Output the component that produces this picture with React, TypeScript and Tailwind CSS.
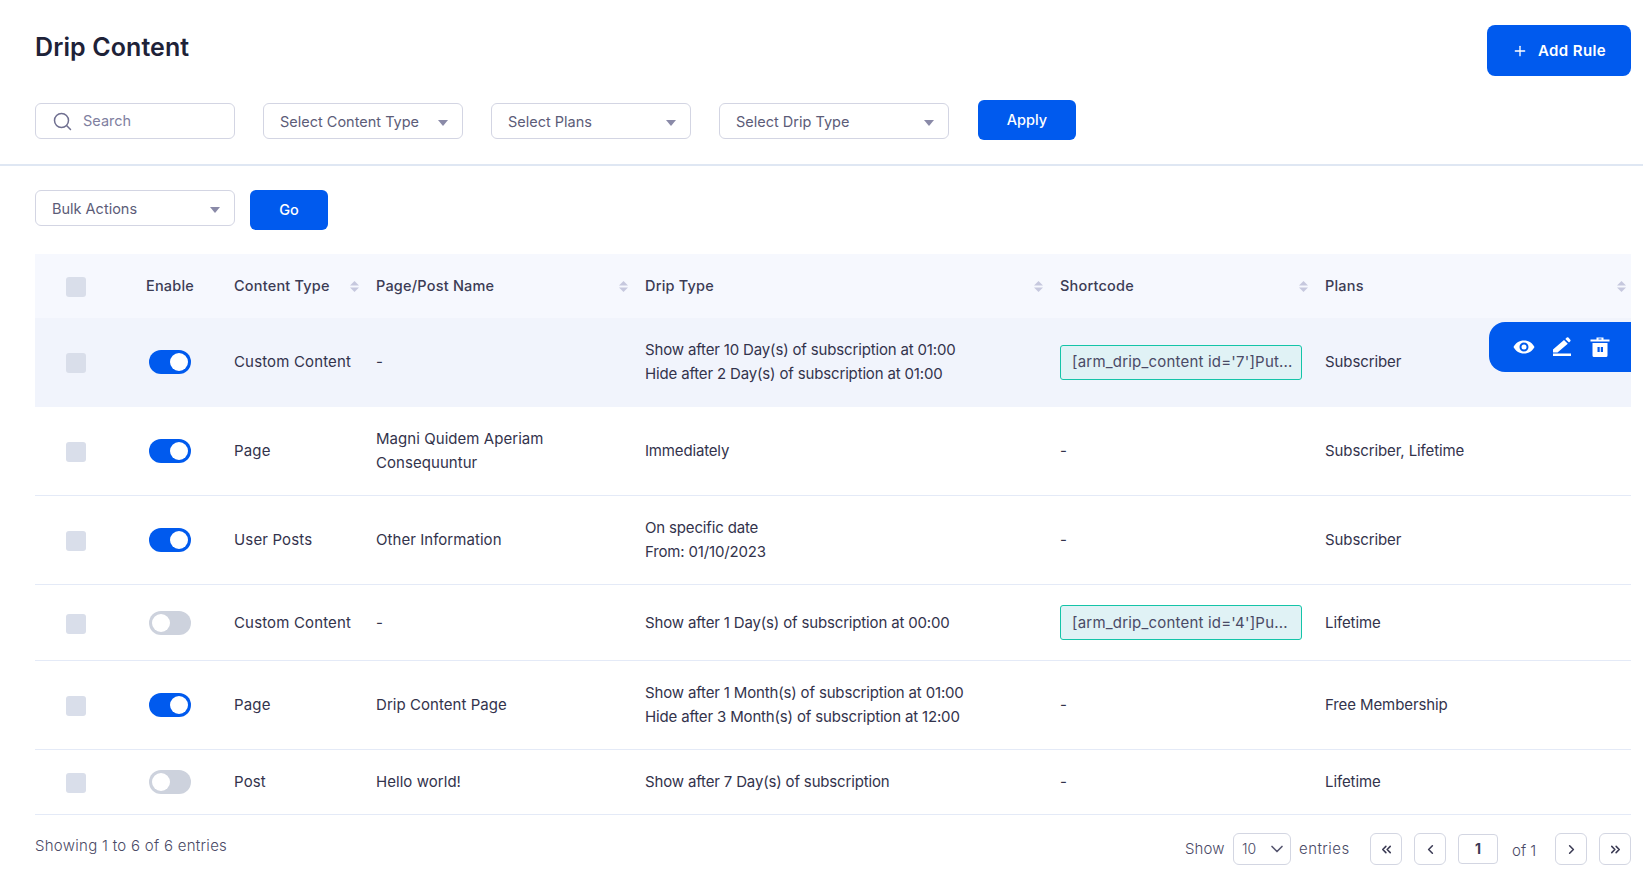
import React from "react";
import { ChevronDown, ChevronsLeft, ChevronLeft, ChevronRight, ChevronsRight, Plus } from "lucide-react";

const font = { fontFamily: "Inter, 'Liberation Sans', sans-serif" };

function Caret() {
  return <svg width="10" height="6" viewBox="0 0 10 6" className="mt-[3px] shrink-0"><path d="M0 0h10L5 6z" fill="#8a8aa8" /></svg>;
}
function Sort() {
  return (
    <svg width="9" height="11" viewBox="0 0 9 11" className="shrink-0">
      <path d="M4.5 0L9 4.5H0z" fill="#c6c8de" />
      <path d="M4.5 11L9 6.5H0z" fill="#c6c8de" />
    </svg>
  );
}
function Select({ label, w }: { label: string; w: string }) {
  return (
    <div className={`flex h-9 items-center justify-between rounded-md border border-[#d3d5e3] bg-white pl-4 pr-[14px] text-[14.5px] text-[#5c5c78] ${w}`}>
      <span className="pt-0.5">{label}</span>
      <Caret />
    </div>
  );
}
function Toggle({ on }: { on: boolean }) {
  return (
    <div className={`ml-[3px] flex h-6 w-[42px] items-center rounded-full px-[3px] ${on ? "justify-end bg-[#005aee]" : "justify-start bg-[#cdd2dd]"}`}>
      <div className="h-[18px] w-[18px] rounded-full bg-white" />
    </div>
  );
}
function Check() {
  return <div className="ml-[31px] mt-[2px] h-5 w-5 rounded-[3px] bg-[#d9deea]" />;
}
function Head({ label, sort, right = "pr-[17px]" }: { label: string; sort?: boolean; right?: string }) {
  return (
    <div className={`flex items-center justify-between ${right}`}>
      <span className="text-[14.5px] font-medium tracking-[0.2px] text-[#3c3c55]">{label}</span>
      {sort && <Sort />}
    </div>
  );
}
function Code({ text }: { text: string }) {
  return (
    <div className="flex h-[35px] w-[242px] items-center rounded-[3px] border border-[#14c4a8] bg-[#e0f2f5] pl-[11px] pr-[8px] text-[15px] tracking-[0.2px] text-[#4a4a66]">
      <span className="truncate">{text}</span>
    </div>
  );
}
const rows = [
  { on: true, type: "Custom Content", name: ["-"], drip: ["Show after 10 Day(s) of subscription at 01:00", "Hide after 2 Day(s) of subscription at 01:00"], code: "[arm_drip_content id='7']Put...", plans: "Subscriber", active: true },
  { on: true, type: "Page", name: ["Magni Quidem Aperiam", "Consequuntur"], drip: ["Immediately"], plans: "Subscriber, Lifetime" },
  { on: true, type: "User Posts", name: ["Other Information"], drip: ["On specific date", "From: 01/10/2023"], plans: "Subscriber" },
  { on: false, type: "Custom Content", name: ["-"], drip: ["Show after 1 Day(s) of subscription at 00:00"], code: "[arm_drip_content id='4']Pu...", plans: "Lifetime" },
  { on: true, type: "Page", name: ["Drip Content Page"], drip: ["Show after 1 Month(s) of subscription at 01:00", "Hide after 3 Month(s) of subscription at 12:00"], plans: "Free Membership" },
  { on: false, type: "Post", name: ["Hello world!"], drip: ["Show after 7 Day(s) of subscription"], plans: "Lifetime" },
];
const grid = "grid grid-cols-[111px_88px_142px_269px_415px_265px_306px] items-center";
function PageBtn({ children }: { children: React.ReactNode }) {
  return <div className="flex h-8 w-8 items-center justify-center rounded-md border border-[#d3d6e2] text-[#3c3c55]">{children}</div>;
}

export default function App() {
  return (
    <div className="h-[885px] w-[1643px] overflow-hidden bg-white" style={font}>
      <div className="flex h-[166px] flex-col border-b-2 border-[#dfe7f3]">
        <div className="flex justify-between pl-[35px] pr-3 pt-[25px]">
          <h1 className="mt-1 text-[25px] leading-9 font-semibold tracking-[0.1px] text-[#1e2238]">Drip Content</h1>
          <button className="flex h-[51px] w-[144px] items-center justify-center gap-[10px] rounded-lg bg-[#005aee] pt-px text-[15px] font-semibold tracking-[0.4px] text-white">
            <Plus size={16} strokeWidth={2} /> Add Rule
          </button>
        </div>
        <div className="mt-6 flex items-start gap-[28px] pl-[35px]">
          <div className="mt-[3px] flex h-9 w-[200px] items-center gap-[11px] rounded-md border border-[#d3d5e3] pl-[17px] text-[14.5px] text-[#8080a0]">
            <svg width="19" height="19" viewBox="0 0 19 19" fill="none" stroke="#6f6f90" strokeWidth="1.5" strokeLinecap="round"><circle cx="8.500" cy="8.500" r="7" /><path d="M13.800 13.800l3.700 3.700" /></svg>
            <span>Search</span>
          </div>
          <div className="mt-[3px]"><Select label="Select Content Type" w="w-[200px]" /></div>
          <div className="mt-[3px]"><Select label="Select Plans" w="w-[200px]" /></div>
          <div className="mt-[3px]"><Select label="Select Drip Type" w="w-[230px]" /></div>
          <button className="ml-px h-10 w-[98px] rounded-md bg-[#005aee] text-[14.5px] font-medium text-white">Apply</button>
        </div>
      </div>

      <div className="flex items-start gap-[15px] pl-[35px] pt-[24px]">
        <Select label="Bulk Actions" w="w-[200px]" />
        <button className="h-10 w-[78px] rounded-md bg-[#005aee] text-[14.5px] font-medium text-white">Go</button>
      </div>

      <div className="ml-[35px] mr-3 mt-6 text-[15px] leading-6 text-[#33334c]">
        <div className={`${grid} h-16 bg-[#f6f8fe]`}>
          <Check />
          <Head label="Enable" />
          <Head label="Content Type" sort />
          <Head label="Page/Post Name" sort />
          <Head label="Drip Type" sort />
          <Head label="Shortcode" sort />
          <Head label="Plans" sort right="pr-[5px]" />
        </div>
        {rows.map((r, i) => (
          <div key={i} className={`${grid} relative border-b py-5 ${r.active ? "border-[#f1f4fc] bg-[#f1f4fc]" : "border-[#e4eaf7]"}`}>
            <Check />
            <Toggle on={r.on} />
            <div className="tracking-[0.15px]">{r.type}</div>
            <div className="tracking-[0.05px]">{r.name.map((t) => <div key={t}>{t}</div>)}</div>
            <div className="tracking-[-0.16px]">{r.drip.map((t) => <div key={t}>{t}</div>)}</div>
            <div>{r.code ? <Code text={r.code} /> : "-"}</div>
            <div className="tracking-[-0.1px]">{r.plans}</div>
            {r.active && (
              <div className="absolute right-0 top-1 flex h-[50px] w-[142px] items-center gap-[14px] rounded-l-2xl bg-[#005aee] pl-[23px]">
                <svg width="24" height="24" viewBox="0 0 24 24" fill="#fff" fillRule="evenodd"><path d="M12 5.500C7.300 5.500 3.300 8.200 1.500 12c1.800 3.800 5.800 6.500 10.500 6.500s8.700-2.700 10.500-6.500C20.700 8.200 16.700 5.500 12 5.500zM12 7.500a4.500 4.500 0 110 9 4.500 4.500 0 010-9zM12 9.500a2.500 2.500 0 100 5 2.500 2.500 0 000-5z" /></svg>
                <svg width="24" height="24" viewBox="0 0 24 24" fill="#fff"><path d="M3 17.500V14.500L14 5l3.800 3.800L7.500 17.500zM15.300 3.900L16.800 2.600a1.200 1.200 0 011.600 0l1.900 2.100a1.200 1.200 0 010 1.600L19 7.600zM3 18.500h18V21H3z" /></svg>
                <svg width="24" height="24" viewBox="0 0 24 24" fill="#fff" fillRule="evenodd"><path d="M2.500 4.500H8.500V2.500h7v2h6v2h-19zM10.500 3.500v1h3v-1zM4.500 8h15v12.500a1.500 1.500 0 01-1.500 1.500H6a1.500 1.500 0 01-1.500-1.500zM9.500 12v5h2.200v-5zM12.800 12v5h2.200v-5z" /></svg>
              </div>
            )}
          </div>
        ))}
      </div>

      <div className="flex items-center justify-between pl-[35px] pr-3 pt-[18px]">
        <span className="-mt-[5px] text-[15px] font-light tracking-[0.28px] text-[#4a4a66]">Showing 1 to 6 of 6 entries</span>
        <div className="flex items-center text-[15px] font-light text-[#4a4a66]">
          <span className="w-10 whitespace-nowrap tracking-[0.1px]">Show</span>
          <div className="ml-2 flex h-8 w-[58px] items-center justify-between rounded-md border border-[#d3d6e2] pl-2 pr-[3px] text-sm">
            10 <ChevronDown size={20} strokeWidth={2} className="text-[#55556f]" />
          </div>
          <span className="ml-2 w-[51px] whitespace-nowrap tracking-[0.45px]">entries</span>
          <div className="ml-5 flex gap-3">
            <PageBtn><ChevronsLeft size={15} strokeWidth={2.5} /></PageBtn>
            <PageBtn><ChevronLeft size={15} strokeWidth={2.5} /></PageBtn>
          </div>
          <div className="ml-3 flex h-[30px] w-10 items-center justify-center rounded border border-[#d3d6e2] text-sm font-bold text-[#3c3c55]">1</div>
          <span className="ml-[14px] mt-1 w-[23px] whitespace-nowrap">of 1</span>
          <div className="ml-5 flex gap-3">
            <PageBtn><ChevronRight size={15} strokeWidth={2.5} /></PageBtn>
            <PageBtn><ChevronsRight size={15} strokeWidth={2.5} /></PageBtn>
          </div>
        </div>
      </div>
    </div>
  );
}
